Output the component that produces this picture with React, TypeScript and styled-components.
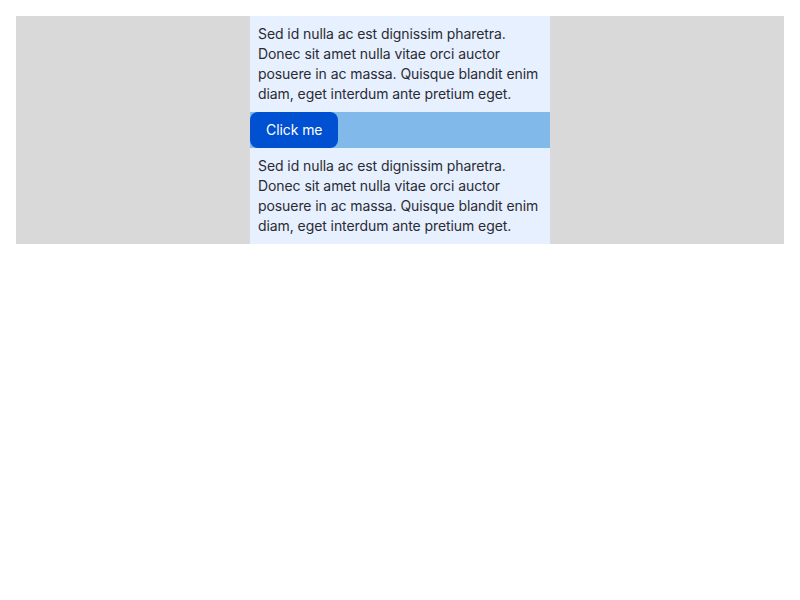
import React from "react";
import styled, { createGlobalStyle } from "styled-components";

const Global = createGlobalStyle`
  body { margin: 0; padding: 16px; font-family: "Inter", sans-serif; background: #ffffff; }
`;

const Stage = styled.div`
  background: #d9d9d9;
  display: flex;
  justify-content: center;
`;

const Column = styled.div`
  width: 300px;
  background: #e6f0fe;
  display: flex;
  flex-direction: column;
`;

const Para = styled.p`
  margin: 0;
  padding: 8px;
  font-size: 14px;
  line-height: 20px;
  letter-spacing: -0.08px;
  color: #2b2b33;
`;

const Bar = styled.div`
  height: 36px;
  background: #80b9ea;
  display: flex;
  align-items: stretch;
`;

const Button = styled.button`
  font-family: "Inter", sans-serif;
  font-size: 14px;
  line-height: 20px;
  letter-spacing: -0.08px;
  color: #ffffff;
  background: #0050d2;
  border: none;
  border-radius: 8px;
  padding: 0 16px;
  white-space: nowrap;
  cursor: pointer;
`;

const text =
  "Sed id nulla ac est dignissim pharetra. Donec sit amet nulla vitae orci auctor posuere in ac massa. Quisque blandit enim diam, eget interdum ante pretium eget.";

export default function App() {
  return (
    <>
      <Global />
      <Stage>
        <Column>
          <Para>{text}</Para>
          <Bar>
            <Button>Click me</Button>
          </Bar>
          <Para>{text}</Para>
        </Column>
      </Stage>
    </>
  );
}
